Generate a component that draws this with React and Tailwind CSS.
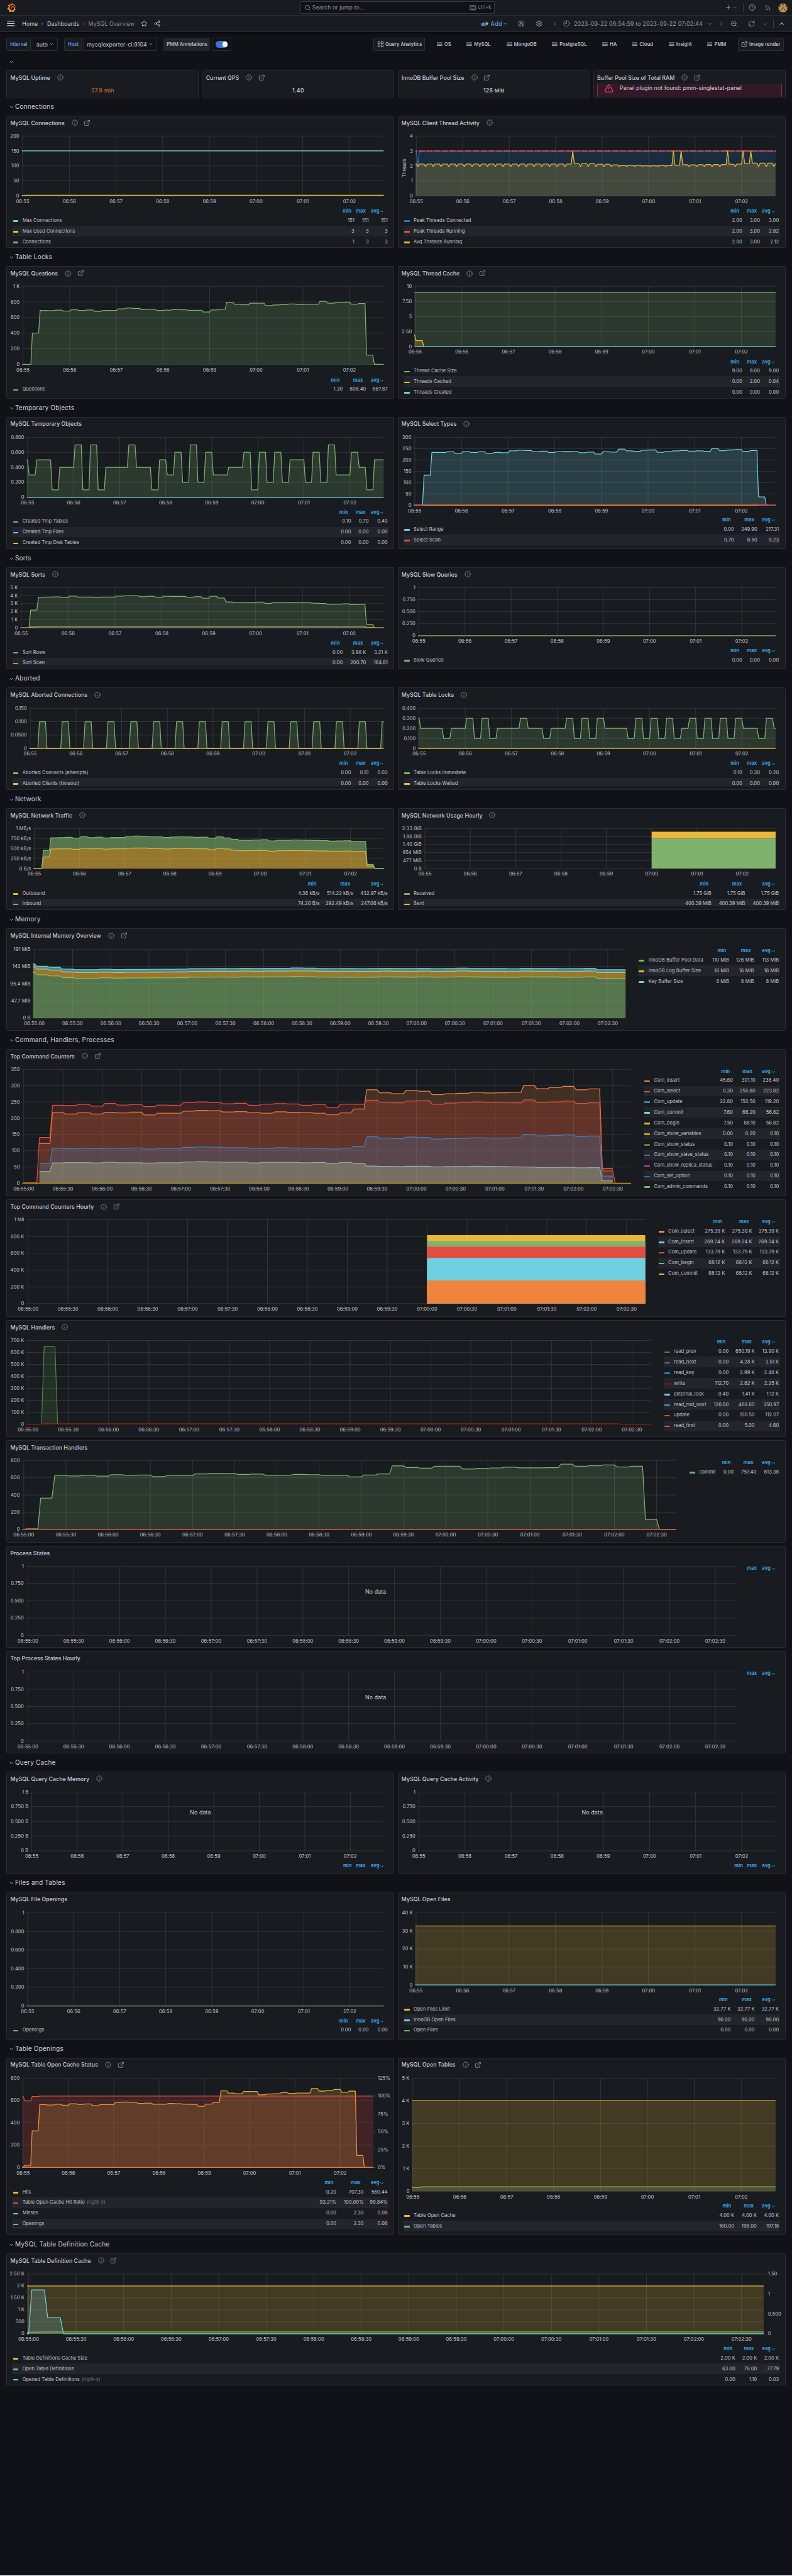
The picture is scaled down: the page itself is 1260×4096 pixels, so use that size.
import React from "react";
import {
  ChevronDown, ChevronRight, ChevronLeft, ChevronUp, Info, ExternalLink, Star, Share2, Save, Settings,
  Clock9, ZoomOut, RefreshCw, Rss, HelpCircle, Plus, Search, Keyboard, LayoutGrid, TriangleAlert,
} from "lucide-react";
import { SiGrafana } from "react-icons/si";

const GREEN = "#7eb26d";
const YELLOW = "#eab839";
const CYAN = "#6ed0e0";
const ORANGE = "#ef843c";
const RED = "#e24d42";
const BLUE = "#1f78c1";
const LIGHT_BLUE = "#447ebc";
const DARK_GREEN = "#508642";

/* ---------- series helpers: time is in seconds from 06:55:00 ---------- */

const flat = (v) => [[-1, v], [464, v]];

// Values hold for eight seconds and move to the next over two.
function steps(before, values) {
  const pts = before === null ? [] : [[-1, before], [0, before]];
  values.forEach((v, k) => {
    if (v === null) return;
    pts.push([2 + 10 * k, v], [Math.min(10 + 10 * k, 464), v]);
  });
  return pts;
}

const repeat = (v, n) => Array.from({ length: n }, () => v);

const questions = [0, 400, 690, 688, 695, 682, 700, 690, 697, 678, 690, 690, 711, 720, 717, 702, 707, 690, 695, 702, 700, 692, 692, 670, 698, 707, 793, 770, 763, 784, 784, 753, 761, 765, 774, 768, 770, 770, 808, 783, 790, 798, 772, 780, 120, 0, 0];
const selectRange = [0, 133, 233, 233, 236, 229, 237, 233, 236, 229, 233, 232, 240, 243, 242, 236, 239, 233, 236, 238, 237, 232, 235, 226, 236, 235, 248, 240, 238, 243, 244, 234, 237, 240, 242, 239, 240, 238, 250, 241, 244, 246, 238, 242, 37, 0, 0];
const tmpTables = [0.3, 0.5, 0.5, 0.1, 0.4, 0.4, 0.7, 0.1, 0.7, 0.1, 0.4, 0.4, 0.4, 0.7, 0.4, 0.4, 0.1, 0.5, 0.3, 0.6, 0.2, 0.7, 0.2, 0.6, 0.3, 0.3, 0.4, 0.4, 0.6, 0.1, 0.6, 0.2, 0.6, 0.2, 0.5, 0.5, 0.2, 0.6, 0.2, 0.7, 0.3, 0.3, 0.6, 0.4, 0.1, 0.5, 0.5];
const sortRows = [0, 2.2, 3.78, 3.83, 3.85, 3.75, 3.95, 3.82, 3.83, 3.77, 3.83, 3.82, 3.95, 3.98, 3.98, 3.87, 3.93, 3.8, 3.92, 3.9, 3.9, 3.8, 3.87, 3.68, 3.92, 3.7, 3.22, 3.14, 3.14, 3.18, 3.2, 3.05, 3.12, 3.13, 3.17, 3.15, 3.14, 3.06, 3.02, 2.92, 2.95, 2.98, 2.88, 2.92, 0.45, 0, 0];
const sortScan = [0, 0.11, ...repeat(0.18, 42), 0.04, 0, 0];
const aborted = Array.from({ length: 47 }, (_, k) => (k % 3 === 1 ? 0.1 : 0));
const tableLocks = [0.2, 0.2, 0.2, 0.1, 0.2, 0.2, 0.3, 0.1, 0.3, 0.1, 0.2, 0.2, 0.2, 0.3, 0.2, 0.2, 0.1, 0.2, 0.2, 0.3, 0.1, 0.3, 0.1, 0.3, 0.2, 0.2, 0.2, 0.1, 0.3, 0.1, 0.3, 0.1, 0.3, 0.1, 0.2, 0.3, 0.1, 0.3, 0.1, 0.3, 0.1, 0.3, 0.2, 0.2, 0.1, 0.3, 0.2];
const outbound = [4, 290, 490, 492, 494, 482, 507, 492, 497, 485, 492, 492, 508, 514, 512, 498, 503, 490, 502, 503, 501, 493, 495, 474, 503, 488, 458, 446, 446, 451, 455, 434, 444, 447, 450, 447, 446, 440, 440, 434, 434, 438, 425, 430, 65, 4, 4];
const traffic = [5, 455, 770, 773, 780, 762, 795, 773, 782, 766, 775, 775, 800, 810, 806, 790, 793, 775, 788, 792, 788, 780, 784, 755, 792, 765, 727, 706, 706, 713, 720, 688, 703, 706, 712, 708, 706, 700, 698, 683, 687, 693, 672, 678, 105, 5, 5];
const bufferPool = [120, 117, 112, 110.5, 110.5, 111.5, 110.7, 111.2, 111.3, 111.5, 111.8, 112, 113.3, 113.5, 113.8, 113.4, 114.3, 114, 114.2, 114.3, 115, 114.8, 113.8, 113.5, 113.6, 113.3, 113.6, 114.3, 114, 113.6, 114.3, 113.3, 113.7, 114.6, 114, 113.6, 113.6, 113, 114.2, 114, 114, 113.2, 113.4, 114.3, 110.3, 110.3, 110.3];
const comSelect = [2, 141, 240, 239.5, 242, 237, 245, 240.5, 242, 235.5, 240.5, 240, 248, 250, 249, 244, 245.5, 240, 243, 244.5, 243.5, 240, 242, 233, 243, 242.5, 255.5, 249, 247, 253, 254, 242.5, 246, 247.5, 250, 248, 248.5, 247, 256, 248, 250, 252.5, 245, 247, 38, 0, 0];
const comInsert = [null, 122, 217, 213, 216.5, 213, 218, 216, 218.5, 210, 215, 215, 221.5, 224, 223, 219, 220, 217, 215, 219.5, 218, 217, 215, 210.5, 216, 228, 287, 278, 275, 285, 283, 272, 275, 276.5, 280, 277.5, 278, 280, 301, 290.5, 294.5, 297.5, 287, 290, 45];
const comUpdate = [null, 61, 107.5, 106, 107.5, 106.5, 108, 107, 108.5, 105, 107, 107, 110.5, 111.5, 111, 109.5, 109.7, 108, 107, 109.5, 108.5, 108, 107, 105, 108, 113.5, 143, 139, 137, 142, 141, 136, 137, 138, 140, 139, 139, 140, 150.5, 145.5, 147, 148.5, 143.5, 145, 22];
const comCommit = [null, 36.5, 62.5, 63.5, 63.7, 62.5, 64.5, 63, 63.3, 62, 63.3, 63.3, 65.5, 66.2, 65.7, 64.5, 65, 62.8, 64.7, 64.7, 64.6, 63, 64, 61, 64.7, 61.5, 53, 52, 51.5, 52.5, 52.5, 50.5, 51.5, 51.5, 52.3, 52, 51.5, 50.8, 50, 48, 48, 49, 47.5, 48.2, 7.5];
const commits = [8, 363, 627, 621, 629, 619, 635, 627, 631, 614, 627, 626, 645, 652, 650, 639, 642, 628, 629, 639, 636, 628, 628, 610, 632, 644, 738, 718, 711, 733, 733, 701, 709, 714, 722, 715, 716, 717, 757, 733, 740, 748, 724, 733, 115, 0, 0];
const hits = [20, 329, 564, 559, 566, 558, 571, 565, 569, 553, 564, 564, 580, 586, 584, 574, 577, 566, 567, 573, 571, 566, 565, 549, 568, 583, 686, 666, 661, 681, 680, 651, 658, 661, 670, 664, 666, 667, 707, 684, 692, 699, 674, 684, 107, 0, 0];

const spikes = new Set([20, 33, 34, 40, 42, 43]);
const threadLevels = [...repeat(2.13, 20), 2.16, 2.16, 2.16, 2.12, 2.12, 2.08, 2.03, 2.04, 2.04, 2.02, 2.02, 2.04, 2.03, 2.06, 2.09, 2.08, 2.09, 2.1, 2.1, 2.1, 2.12, 2.13, 2.16, 2.19, 2.19, 2.19, 2.19];
const avgThreads = [[-1, 2.13], [0, 2.13]];
threadLevels.forEach((v, k) => {
  avgThreads.push([2 + 10 * k, spikes.has(k) ? 3 : 1.98]);
  if (k < 46) avgThreads.push([4 + 10 * k, v], [10 + 10 * k, v]);
  else avgThreads.push([464, v]);
});
const threadDots = Array.from({ length: 233 }, (_, i) => [2 * i, i % 5 === 1 && !spikes.has((i - 1) / 5) ? 2 : 3]);

/* ---------- chart ---------- */

const minuteTicks = Array.from({ length: 8 }, (_, i) => [i * 60, i < 5 ? `06:5${5 + i}` : `07:0${i - 5}`]);
const halfTicks = Array.from({ length: 16 }, (_, i) => [i * 30, `${i < 10 ? `06:5${5 + Math.floor(i / 2)}` : `07:0${Math.floor(i / 2) - 5}`}:${i % 2 ? "30" : "00"}`]);

function Chart({ box, plot, ymax, y, long, series = [], dots, right, axisName, empty }) {
  const [L, R, T, B] = plot;
  const X = (t) => L + ((t + 1) / 465) * (R - L);
  const Y = (v, m = ymax) => B - (v / m) * (B - T);
  const join = (pts, m) => pts.map(([t, v]) => `${X(t).toFixed(1)},${Y(v, m).toFixed(1)}`).join(" ");
  const xt = long ? halfTicks : minuteTicks;
  const rowY = (i) => T + ((B - T) * i) / (y.length - 1);
  return (
    <svg width={box[2]} height={box[3]} viewBox={box.join(" ")} className="block shrink-0 font-['Inter',sans-serif] text-[12px]">
      <g stroke="#42454a" strokeWidth="1">
        {y.map((_, i) => <line key={i} x1={L} x2={R} y1={rowY(i)} y2={rowY(i)} />)}
        {xt.map(([t]) => <line key={t} x1={X(t)} x2={X(t)} y1={T} y2={B} />)}
        {right && right.labels.map((_, i) => {
          const yy = T + ((B - T) * i) / (right.labels.length - 1);
          return <line key={i} x1={R} x2={R + 6} y1={yy} y2={yy} />;
        })}
      </g>
      {series.map((s, i) => {
        const pts = s.data;
        const base = s.base ? [...s.base].reverse() : [[pts[pts.length - 1][0], 0], [pts[0][0], 0]];
        return (
          <g key={i}>
            {s.fill && <polygon points={`${join(pts, s.max)} ${join(base, s.max)}`} fill={s.fillColor || s.color} fillOpacity={s.fill} />}
            {s.width !== 0 && <polyline points={join(pts, s.max)} fill="none" stroke={s.color} strokeWidth={s.width || 2} strokeLinejoin="round" />}
            {dots && i === 0 && dots.map(([t, v]) => <circle key={t} cx={X(t)} cy={Y(v)} r="1.9" fill={RED} />)}
          </g>
        );
      })}
      <g fill="#c4c4d2" letterSpacing="0.1">
        {y.map((label, i) => <text key={i} x={L - 6.5} y={rowY(i) + 4} textAnchor="end">{label}</text>)}
        {xt.map(([t, label]) => <text key={t} x={X(t)} y={B + 18} textAnchor="middle">{label}</text>)}
        {right && right.labels.map((label, i) => (
          <text key={i} x={R + 11} y={T + ((B - T) * i) / (right.labels.length - 1) + 4}>{label}</text>
        ))}
        {axisName && <text transform={`translate(${L - 23.5} ${(T + B) / 2 + 5}) rotate(-90)`} textAnchor="middle">{axisName}</text>}
      </g>
      {empty && <text x={empty[0]} y={empty[1]} textAnchor="middle" fill="#ccccdc" className="text-[14px]" letterSpacing="0.2">No data</text>}
    </svg>
  );
}

/* ---------- legend ---------- */

function Legend({ rows = [], cols, heads = ["min", "max", "avg"] }) {
  return (
    <div className="text-[12px] leading-none tracking-[0.08px] text-[#c4c4d2]">
      <div className="flex h-[20px] items-center justify-end pr-[2.4px] font-bold text-[#33a2e5]">
        {heads.map((h, i) => (
          <div key={h} className={`flex justify-end items-center whitespace-nowrap pr-[7.7px] ${cols[i]}`}>
            {h}
            {h === "avg" && <ChevronDown size={14} strokeWidth={2.6} className="-mr-[0.5px] mt-[2px]" />}
          </div>
        ))}
      </div>
      {rows.map(([color, name, ...values], i) => (
        <div key={name} className={`flex h-[26.8px] items-center pl-[2px] pr-[2.4px] whitespace-nowrap ${i % 2 ? "bg-[#22252b]" : ""}`}>
          <span className={`mt-[3px] mr-[10px] h-[4px] w-[14px] rounded-[1px] ${color}`} />
          <span className="flex-1">
            {name.replace(" (right-y)", "")}
            {name.endsWith("(right-y)") && <span className="ml-[5px] text-[#7b7c86]">(right-y)</span>}
          </span>
          {values.map((v, j) => <span key={j} className={`text-right ${cols[j]}`}>{v}</span>)}
        </div>
      ))}
    </div>
  );
}

const g = "bg-[#7eb26d]", ye = "bg-[#eab839]", cy = "bg-[#6ed0e0]", or = "bg-[#ef843c]", re = "bg-[#e24d42]", bl = "bg-[#1f78c1]";

/* ---------- panels ---------- */

const shell = "rounded-[2px] border border-[#2a2c32] bg-[#181b1f] overflow-hidden";

function Title({ children, info, ext }) {
  return (
    <div className="flex h-[32px] shrink-0 items-center pt-[1px] pl-[8.5px] text-[14px] font-medium text-[#ccccdc]">
      <span className="whitespace-nowrap">{children}</span>
      {info && <Info size={16} className="ml-[17.5px] text-[#91929c]" />}
      {ext && <ExternalLink size={17} className="ml-[15.3px] text-[#91929c]" />}
    </div>
  );
}

function Panel({ title, info, ext, at, size, chart, legendY, legend }) {
  const box = [at[0] + 1, at[1] + 33, 978, legendY - at[1] - 33];
  return (
    <section className={`flex flex-1 flex-col ${size} ${shell}`}>
      <Title info={info} ext={ext}>{title}</Title>
      <Chart box={box} {...chart} />
      <div className="mx-[13px] mb-[8px] min-h-0 flex-1 overflow-hidden"><Legend {...legend} /></div>
    </section>
  );
}

function WidePanel({ title, info, ext, top, size, legendClass, chartWidth, chart, legend }) {
  const inner = { 258: 224, 296: 262, 372: 338 }[size[1]];
  return (
    <section className={`flex flex-col ${size[0]} ${shell}`}>
      <Title info={info} ext={ext}>{title}</Title>
      <div className="flex justify-between">
        <Chart box={[17, top + 33, chartWidth, inner]} long {...chart} />
        <div className={`mr-[13px] mt-[12.7px] ${legendClass}`}><Legend {...legend} /></div>
      </div>
    </section>
  );
}

function Row({ children }) {
  return (
    <div className="flex h-[30px] items-center pl-[7px] text-[16px] tracking-[0.3px] text-[#ccccdc]">
      <ChevronDown size={14} strokeWidth={2.4} className="mt-[3px] mr-[1px]" />
      <h2>{children}</h2>
    </div>
  );
}

const Pair = ({ children }) => <div className="flex gap-2">{children}</div>;

const c3 = ["", "w-[44.6px]", "w-[48px]"];
const cq = ["", "w-[59px]", "w-[54.6px]"];

/* ---------- top bars ---------- */

function Avatar() {
  const cells = ["01010", "01110", "11011", "10101", "01110"];
  return (
    <svg width="24" height="24" viewBox="0 0 24 24" className="ml-[17.7px]">
      <clipPath id="round"><circle cx="12" cy="12" r="12" /></clipPath>
      <g clipPath="url(#round)">
        <rect width="24" height="24" fill="#41631b" />
        {cells.map((r, y) => [...r].map((v, x) => v === "1" && <rect key={`${x}${y}`} x={2 + x * 4} y={2 + y * 4} width="4.1" height="4.1" fill="#f0886a" />))}
      </g>
    </svg>
  );
}

function TopBars() {
  return (
    <header className="bg-[#181b1f] text-[#ccccdc] whitespace-nowrap shadow-[0_1px_6px_rgba(0,0,0,0.7)] [&_svg]:shrink-0">
      <div className="flex h-[40px] items-center border-b border-[#2a2c32] pl-[17px] text-[#9a9ba5]">
        <svg width="0" height="0"><defs><linearGradient id="flame" x1="0" y1="0" x2="0" y2="1"><stop offset="0.2" stopColor="#f05a28" /><stop offset="1" stopColor="#fbca0a" /></linearGradient></defs></svg>
        <SiGrafana size={23} fill="url(#flame)" />
        <div className="ml-[719px] flex h-[32px] w-[490px] shrink-0 items-center rounded-[2px] border border-[#36383f] bg-[#111217] px-[7px] text-[14px] tracking-[0.1px] text-[#8e8f9a]">
          <Search size={17} className="mr-[4px]" />
          <span className="flex-1">Search or jump to...</span>
          <Keyboard size={17} className="mr-[4px]" />
          <span className="text-[12px]">ctrl+k</span>
        </div>
        <Plus size={18} className="ml-[581.3px]" /><ChevronDown size={13} className="ml-[1px] mr-[14.5px]" />
        <span className="h-[23px] w-px bg-[#3b3d44]" />
        <HelpCircle size={18} className="ml-[12.7px]" />
        <Rss size={17} className="ml-[21.3px]" />
        <Avatar />
      </div>
      <div className="flex h-[41px] items-center border-b border-[#2a2c32] pl-[18px] text-[14px] tracking-[0.15px]">
        <svg width="20" height="14" viewBox="0 0 20 14" stroke="currentColor" strokeWidth="1.7" strokeLinecap="round"><path d="M1 1.5h18M1 7h18M1 12.5h18" /></svg>
        <span className="ml-[18px] w-[43px] shrink-0">Home</span>
        <ChevronRight size={13} className="ml-[1px] mr-[6px] text-[#9a9ba5]" />
        <span className="w-[84.5px] shrink-0">Dashboards</span>
        <ChevronRight size={13} className="ml-[1px] mr-[5.7px] text-[#9a9ba5]" />
        <span className="w-[132px] shrink-0 text-[#8e8f9a]">MySQL Overview</span>
        <Star size={17} /><Share2 size={17} className="ml-[17.5px]" />
        <div className="ml-[809.5px] flex items-center text-[#9a9ba5]">
          <svg width="18" height="14" viewBox="0 0 18 14" className="mr-[5px]">
            <g fill="#6e9fff"><rect x="0" y="6" width="2.6" height="7" /><rect x="3.6" y="4" width="2.6" height="9" /><rect x="7.2" y="6" width="2.6" height="7" /><rect x="10.4" y="2" width="2" height="11" /></g>
            <path d="M14.5 4v7M11 7.5h7" stroke="#ff9830" strokeWidth="2" />
          </svg>
          <span className="w-[30px] font-medium tracking-[0.7px] text-[#6e9fff]">Add</span>
          <ChevronDown size={15} className="mr-[24.2px] text-[#6e9fff]" />
          <Save size={17} className="mr-[26.5px]" />
          <Settings size={18} className="mr-[23.8px]" />
          <ChevronLeft size={15} className="mr-[14.5px]" />
          <Clock9 size={17} className="mr-[9.3px]" />
          <span className="w-[335.7px] shrink-0 tracking-[0.33px]">2023-09-22 06:54:59 to 2023-09-22 07:02:44</span>
          <ChevronDown size={13} className="ml-[1px] mr-[16px]" />
          <ChevronRight size={15} className="mr-[14.8px]" />
          <ZoomOut size={18} className="mr-[26px]" />
          <RefreshCw size={18} className="mr-[17.3px]" />
          <ChevronDown size={13} className="ml-[1px] mr-[15px]" />
          <span className="mr-[11.7px] h-[23px] w-px bg-[#3b3d44]" />
          <ChevronUp size={18} strokeWidth={2.4} />
        </div>
      </div>
    </header>
  );
}

function Links() {
  const items = [["OS", "w-[75px]"], ["MySQL", "w-[101px]"], ["MongoDB", "w-[115px]"], ["PostgreSQL", "w-[127px]"], ["HA", "w-[75px]"], ["Cloud", "w-[92.5px]"], ["Insight", "w-[96.5px]"], ["PMM", "w-[78px]"]];
  const btn = "flex h-[32px] items-center rounded-[2px] border border-[#2e3036] bg-[#181b1f] whitespace-nowrap";
  return (
    <div className="flex items-center text-[12px] font-medium tracking-[0.08px] text-[#ccccdc]">
      <div className={`${btn} mr-[30px] w-[130px] pl-[7px]`}><LayoutGrid size={17.5} className="mr-[3.8px]" />Query Analytics</div>
      {items.map(([t, w]) => (
        <div key={t} className={`flex items-center ${w}`}>
          <svg width="14" height="10" viewBox="0 0 14 10" className="mr-[5px] shrink-0" stroke="#ccccdc" strokeWidth="1.3"><path d="M0 1.5h14M0 5.2h14M0 9h14" /></svg>{t}
        </div>
      ))}
      <div className={`${btn} w-[117px] pl-[7px] tracking-[0.25px]`}><ExternalLink size={17} className="mr-[3.6px]" />Image render</div>
    </div>
  );
}

function Controls() {
  const box = "flex h-[32px] shrink-0 items-center rounded-[2px] border border-[#2e3036] px-[8px] whitespace-nowrap";
  return (
    <div className="flex h-[32px] items-center pr-[4px] text-[12px] font-medium tracking-[0.08px]">
      <span className={`${box} w-[62px] bg-[#181b1f] text-[#6e9fff]`}>Interval</span>
      <span className={`${box} ml-[4px] w-[64px] bg-[#111217] text-[14px] font-normal text-[#ccccdc]`}>auto<ChevronDown size={13} className="ml-[3px]" /></span>
      <span className={`${box} ml-[16px] w-[44px] bg-[#181b1f] text-[#6e9fff]`}>Host</span>
      <span className={`${box} ml-[4px] w-[187px] bg-[#111217] text-[14px] font-normal tracking-[0.15px] text-[#ccccdc]`}>mysqlexporter-cl:9104<ChevronDown size={13} className="ml-[4px]" /></span>
      <span className="ml-[16px] flex h-[32px] w-[118px] shrink-0 items-center rounded-[2px] bg-[#22252b] pl-[8px] whitespace-nowrap text-[#ccccdc]">PMM Annotations</span>
      <span className={`${box} ml-[4px] w-[50px] bg-[#111217]`}>
        <span className="flex h-[16px] w-[32px] items-center justify-end rounded-full bg-[#3d71d9] pr-[1px]"><span className="size-[13px] rounded-full bg-white" /></span>
      </span>
      <div className="flex flex-1 justify-end"><Links /></div>
    </div>
  );
}

function Stat({ title, ext, children }) {
  return (
    <section className={`flex h-[68px] flex-1 flex-col ${shell}`}>
      <Title info ext={ext}>{title}</Title>
      {children}
    </section>
  );
}

const value = "pt-[6.5px] text-center text-[14px] font-medium tracking-[0.3px]";
const quarters = ["1", "0.750", "0.500", "0.250", "0"];

export default function App() {
  return (
    <div className="min-h-[6500px] w-[2000px] bg-[#111217] font-['Inter',sans-serif] [zoom:0.63]">
      <TopBars />
      <main className="flex flex-col gap-2 px-[16px] pt-[15px]">
        <div className="mb-[4px]"><Controls /></div>
        <Row />
        <div className="flex gap-2">
          <Stat title="MySQL Uptime"><div className={`${value} text-[#c96a22]`}>37.9 min</div></Stat>
          <Stat title="Current QPS" ext><div className={`${value} text-[#d8d9da]`}>1.40</div></Stat>
          <Stat title="InnoDB Buffer Pool Size" ext><div className={`${value} text-[#d8d9da]`}>128 <span className="text-[13px]">MiB</span></div></Stat>
          <Stat title="Buffer Pool Size of Total RAM" ext>
            <div className="mx-[8px] -mt-[1px] flex h-[60px] shrink-0 items-start border-x border-[#8a2c4c] bg-[#331925] pl-[16px] text-[14px] tracking-[0.13px] whitespace-nowrap text-[#ccccdc]">
              <TriangleAlert size={24} strokeWidth={1.8} className="mr-[16px] text-[#ff5286]" />Panel plugin not found: pmm-singlestat-panel
            </div>
          </Stat>
        </div>

        <Row>Connections</Row>
        <Pair>
          <Panel title="MySQL Connections" info ext at={[16, 292]} size="h-[334px]" legendY={522.9}
            chart={{ plot: [54.7, 968.5, 342.9, 493.8], ymax: 200, y: ["200", "150", "100", "50", "0"], series: [{ color: CYAN, data: flat(150.5) }, { color: GREEN, data: flat(0.8) }, { color: YELLOW, data: steps(1, repeat(2.2, 47)) }] }}
            legend={{ cols: ["", "w-[36.4px]", "w-[47.8px]"], rows: [[cy, "Max Connections", "151", "151", "151"], [ye, "Max Used Connections", "3", "3", "3"], [g, "Connections", "1", "3", "3"]] }} />
          <Panel title="MySQL Client Thread Activity" info at={[1004, 292]} size="h-[334px]" legendY={522.9}
            chart={{ plot: [1048, 1957.3, 342.9, 494.5], ymax: 4, y: ["4", "3", "2", "1", "0"], axisName: "Threads", dots: threadDots, series: [{ color: BLUE, fill: 0.2, data: [[-1, 3], [0, 3], [2, 2], [4, 3], [464, 3]] }, { color: YELLOW, fill: 0.2, data: avgThreads }] }}
            legend={{ cols: c3, rows: [[bl, "Peak Threads Connected", "2.00", "3.00", "3.00"], [re, "Peak Threads Running", "2.00", "3.00", "2.82"], [ye, "Avg Threads Running", "2.00", "3.00", "2.12"]] }} />
        </Pair>

        <Row>Table Locks</Row>
        <Pair>
          <Panel title="MySQL Questions" info ext at={[16, 672]} size="h-[334px]" legendY={949}
            chart={{ plot: [55.8, 968.5, 722.8, 920], ymax: 1000, y: ["1 K", "800", "600", "400", "200", "0"], series: [{ color: GREEN, fill: 0.2, data: steps(0, questions) }] }}
            legend={{ cols: cq, rows: [[g, "Questions", "1.30", "808.40", "667.87"]] }} />
          <Panel title="MySQL Thread Cache" info ext at={[1004, 672]} size="h-[334px]" legendY={902.8}
            chart={{ plot: [1045.3, 1957.3, 722.8, 875], ymax: 10, y: ["10", "7.50", "5", "2.50", "0"], series: [{ color: GREEN, fill: 0.2, data: flat(9) }, { color: YELLOW, fill: 0.2, data: [[-1, 2], [1, 1], [9, 1], [11, 0]] }, { color: CYAN, data: flat(0) }] }}
            legend={{ cols: c3, rows: [[g, "Thread Cache Size", "9.00", "9.00", "9.00"], [ye, "Threads Cached", "0.00", "2.00", "0.04"], [cy, "Threads Created", "0.00", "0.00", "0.00"]] }} />
        </Pair>

        <Row>Temporary Objects</Row>
        <Pair>
          <Panel title="MySQL Temporary Objects" at={[16, 1052]} size="h-[334px]" legendY={1282.4}
            chart={{ plot: [67.2, 968.5, 1103, 1254.6], ymax: 0.8, y: ["0.800", "0.600", "0.400", "0.200", "0"], series: [{ color: GREEN, fill: 0.2, data: steps(0.5, tmpTables) }, { color: CYAN, data: flat(0) }] }}
            legend={{ cols: c3, rows: [[g, "Created Tmp Tables", "0.10", "0.70", "0.40"], [cy, "Created Tmp Files", "0.00", "0.00", "0.00"], [ye, "Created Tmp Disk Tables", "0.00", "0.00", "0.00"]] }} />
          <Panel title="MySQL Select Types" info at={[1004, 1052]} size="h-[334px]" legendY={1302.5}
            chart={{ plot: [1044, 1957.3, 1103, 1274.5], ymax: 300, y: ["300", "250", "200", "150", "100", "50", "0"], series: [{ color: CYAN, fill: 0.2, data: steps(0, selectRange) }, { color: ORANGE, data: flat(0) }, { color: RED, data: steps(1, [1, ...repeat(4.5, 43), 1, 0, 0]) }] }}
            legend={{ cols: cq, rows: [[cy, "Select Range", "0.00", "249.90", "217.31"], [re, "Select Scan", "0.70", "6.50", "5.23"]] }} />
        </Pair>

        <Row>Sorts</Row>
        <Pair>
          <Panel title="MySQL Sorts" info at={[16, 1432]} size="h-[258px]" legendY={1612.9}
            chart={{ plot: [51.2, 968.5, 1483, 1584.5], ymax: 5, y: ["5 K", "4 K", "3 K", "2 K", "1 K", "0"], series: [{ color: GREEN, fill: 0.2, data: steps(0, sortRows) }, { color: CYAN, data: flat(0) }, { color: ORANGE, data: steps(0, sortScan) }] }}
            legend={{ cols: cq, rows: [[g, "Sort Rows", "0.00", "3.98 K", "3.21 K"], [or, "Sort Scan", "0.00", "200.70", "164.81"]] }} />
          <Panel title="MySQL Slow Queries" info at={[1004, 1432]} size="h-[258px]" legendY={1632.4}
            chart={{ plot: [1054.2, 1957.3, 1483, 1604.6], ymax: 1, y: quarters, series: [{ color: GREEN, data: flat(0) }] }}
            legend={{ cols: c3, rows: [[g, "Slow Queries", "0.00", "0.00", "0.00"]] }} />
        </Pair>

        <Row>Aborted</Row>
        <Pair>
          <Panel title="MySQL Aborted Connections" info at={[16, 1736]} size="h-[258px]" legendY={1916.8}
            chart={{ plot: [74, 968.5, 1786.8, 1888.3], ymax: 0.15, y: ["0.150", "0.100", "0.0500", "0"], series: [{ color: GREEN, fill: 0.2, data: steps(0, aborted) }, { color: YELLOW, data: flat(0) }] }}
            legend={{ cols: c3, rows: [[g, "Aborted Connects (attempts)", "0.00", "0.10", "0.03"], [ye, "Aborted Clients (timeout)", "0.00", "0.00", "0.00"]] }} />
          <Panel title="MySQL Table Locks" info at={[1004, 1736]} size="h-[258px]" legendY={1916.8}
            chart={{ plot: [1055, 1957.3, 1786.8, 1888.3], ymax: 0.4, y: ["0.400", "0.300", "0.200", "0.100", "0"], series: [{ color: GREEN, fill: 0.2, data: steps(0.3, tableLocks) }, { color: YELLOW, data: flat(0) }] }}
            legend={{ cols: c3, rows: [[g, "Table Locks Immediate", "0.10", "0.30", "0.20"], [ye, "Table Locks Waited", "0.00", "0.00", "0.00"]] }} />
        </Pair>

        <Row>Network</Row>
        <Pair>
          <Panel title="MySQL Network Traffic" info at={[16, 2040]} size="h-[258px]" legendY={2221}
            chart={{ plot: [84.3, 968.5, 2091, 2192.1], ymax: 1000, y: ["1 MB/s", "750 kB/s", "500 kB/s", "250 kB/s", "0 B/s"], series: [{ color: YELLOW, fill: 0.6, data: steps(4, outbound) }, { color: GREEN, fill: 0.6, data: steps(5, traffic), base: steps(4, outbound) }] }}
            legend={{ cols: ["", "w-[85px]", "w-[87px]"], rows: [[ye, "Outbound", "4.36 kB/s", "514.22 kB/s", "432.97 kB/s"], [g, "Inbound", "74.20 B/s", "292.49 kB/s", "247.06 kB/s"]] }} />
          <Panel title="MySQL Network Usage Hourly" info at={[1004, 2040]} size="h-[258px]" legendY={2221}
            chart={{ plot: [1069.8, 1957.3, 2091, 2192.1], ymax: 2.33, y: ["2.33 GiB", "1.86 GiB", "1.40 GiB", "954 MiB", "477 MiB", "0 B"], series: [{ color: YELLOW, fill: 1, width: 0, data: [[300, 2.14], [464, 2.14]], base: [[300, 1.75], [464, 1.75]] }, { color: GREEN, fill: 1, width: 0, data: [[300, 1.75], [464, 1.75]] }] }}
            legend={{ cols: ["", "w-[85px]", "w-[85.5px]"], rows: [[g, "Received", "1.75 GiB", "1.75 GiB", "1.75 GiB"], [ye, "Sent", "400.39 MiB", "400.39 MiB", "400.39 MiB"]] }} />
        </Pair>

        <Row>Memory</Row>
        <WidePanel title="MySQL Internal Memory Overview" info ext top={2344} size={["h-[258px]", 258]} chartWidth={1575} legendClass="w-[358px]"
          chart={{ plot: [83, 1579.5, 2395, 2569], ymax: 191, y: ["191 MiB", "143 MiB", "95.4 MiB", "47.7 MiB", "0 B"], series: [
            { color: GREEN, fill: 0.6, data: steps(126.5, bufferPool) },
            { color: YELLOW, fill: 0.6, data: steps(142.5, bufferPool.map((v) => v + 16)), base: steps(126.5, bufferPool) },
            { color: CYAN, fill: 0.6, data: steps(150.5, bufferPool.map((v) => v + 24)), base: steps(142.5, bufferPool.map((v) => v + 16)) }] }}
          legend={{ cols: ["", "w-[62.5px]", "w-[63.2px]"], rows: [[g, "InnoDB Buffer Pool Data", "110 MiB", "126 MiB", "113 MiB"], [ye, "InnoDB Log Buffer Size", "16 MiB", "16 MiB", "16 MiB"], [cy, "Key Buffer Size", "8 MiB", "8 MiB", "8 MiB"]] }} />

        <Row>Command, Handlers, Processes</Row>
        <WidePanel title="Top Command Counters" info ext top={2648} size={["h-[372px]", 372]} chartWidth={1595} legendClass="w-[344px]"
          chart={{ plot: [56.2, 1593.2, 2699, 2986.6], ymax: 350, y: ["350", "300", "250", "200", "150", "100", "50", "0"], series: [
            { color: ORANGE, fill: 0.2, data: steps(null, comInsert) },
            { color: RED, fill: 0.2, data: steps(1, comSelect) },
            { color: LIGHT_BLUE, fill: 0.25, data: steps(null, comUpdate) },
            { color: CYAN, fill: 0.2, width: 0, data: steps(null, comCommit) },
            { color: "#96a8a4", fillColor: YELLOW, fill: 0.17, data: steps(null, comCommit) },
            { color: "#bfa31c", data: flat(0.3) }] }}
          legend={{ cols: ["", "w-[56.8px]", "w-[59.3px]"], rows: [
            [or, "Com_insert", "45.60", "301.10", "238.40"], [re, "Com_select", "0.30", "255.80", "223.82"], ["bg-[#447ebc]", "Com_update", "22.80", "150.50", "119.20"], [cy, "Com_commit", "7.60", "66.20", "56.82"], [ye, "Com_begin", "7.50", "66.10", "56.82"], ["bg-[#cca300]", "Com_show_variables", "0.00", "0.20", "0.10"], ["bg-[#508642]", "Com_show_status", "0.10", "0.10", "0.10"], ["bg-[#705da0]", "Com_show_slave_status", "0.10", "0.10", "0.10"], ["bg-[#ba43a9]", "Com_show_replica_status", "0.10", "0.10", "0.10"], [bl, "Com_set_option", "0.10", "0.10", "0.10"], [g, "Com_admin_commands", "0.10", "0.10", "0.10"]] }} />
        <WidePanel title="Top Command Counters Hourly" info ext top={3028} size={["h-[296px]", 296]} chartWidth={1630} legendClass="w-[308px]"
          chart={{ plot: [67, 1629, 3079.1, 3290.9], ymax: 1000, y: ["1 Mil", "800 K", "600 K", "400 K", "200 K", "0"], series: [
            { color: YELLOW, fill: 1, width: 0, data: [[300, 814.7], [464, 814.7]] }, { color: GREEN, fill: 1, width: 0, data: [[300, 746.5], [464, 746.5]] }, { color: RED, fill: 1, width: 0, data: [[300, 678.4], [464, 678.4]] }, { color: CYAN, fill: 1, width: 0, data: [[300, 544.6], [464, 544.6]] }, { color: ORANGE, fill: 1, width: 0, data: [[300, 275.4], [464, 275.4]] }] }}
          legend={{ cols: ["", "w-[68.9px]", "w-[67.6px]"], rows: [[or, "Com_select", "275.39 K", "275.39 K", "275.39 K"], [cy, "Com_insert", "269.24 K", "269.24 K", "269.24 K"], [re, "Com_update", "133.79 K", "133.79 K", "133.79 K"], [g, "Com_begin", "68.12 K", "68.12 K", "68.12 K"], [ye, "Com_commit", "68.12 K", "68.12 K", "68.12 K"]] }} />
        <WidePanel title="MySQL Handlers" info top={3332} size={["h-[296px]", 296]} chartWidth={1645} legendClass="w-[294px]"
          chart={{ plot: [67, 1643, 3383.3, 3594.5], ymax: 700, y: ["700 K", "600 K", "500 K", "400 K", "300 K", "200 K", "100 K", "0"], series: [{ color: DARK_GREEN, fill: 0.2, data: [[10, 0], [12, 651], [20, 651], [22, 0]] }, { color: "#b8320f", data: steps(0, [0, ...repeat(2.5, 43), 0, 0, 0]) }, { color: "#890f02", data: flat(0), width: 1.4 }] }}
          legend={{ cols: ["", "w-[65.7px]", "w-[61.2px]"], rows: [["bg-[#508642]", "read_prev", "0.00", "650.19 K", "13.90 K"], ["bg-[#705da0]", "read_next", "0.00", "4.28 K", "3.51 K"], [bl, "read_key", "0.00", "2.99 K", "2.48 K"], ["bg-[#890f02]", "write", "112.70", "2.82 K", "2.25 K"], [cy, "external_lock", "0.40", "1.41 K", "1.12 K"], ["bg-[#447ebc]", "read_rnd_next", "126.60", "488.60", "350.97"], ["bg-[#c15c17]", "update", "0.00", "150.50", "112.07"], [re, "read_first", "0.00", "5.00", "4.60"]] }} />
        <WidePanel title="MySQL Transaction Handlers" top={3636} size={["h-[258px]", 258]} chartWidth={1705} legendClass="w-[230px]"
          chart={{ plot: [56, 1707.5, 3686.9, 3861], ymax: 800, y: ["800", "600", "400", "200", "0"], series: [{ color: GREEN, fill: 0.2, data: steps(0, commits) }, { color: RED, data: flat(0), width: 2.4 }] }}
          legend={{ cols: ["", "w-[57.4px]", "w-[56.8px]"], rows: [[g, "commit", "0.00", "757.40", "613.38"]] }} />
        <WidePanel title="Process States" top={3902} size={["h-[258px]", 258]} chartWidth={1850} legendClass="w-[100px]"
          chart={{ plot: [66, 1860, 3953, 4127.6], ymax: 1, y: quarters, empty: [948.3, 4023] }}
          legend={{ heads: ["max", "avg"], cols: ["", "w-[48px]"] }} />
        <WidePanel title="Top Process States Hourly" top={4168} size={["h-[258px]", 258]} chartWidth={1850} legendClass="w-[100px]"
          chart={{ plot: [66, 1860, 4219.4, 4393.5], ymax: 1, y: quarters, empty: [948.3, 4289] }}
          legend={{ heads: ["max", "avg"], cols: ["", "w-[48px]"] }} />

        <Row>Query Cache</Row>
        <Pair>
          <Panel title="MySQL Query Cache Memory" info at={[16, 4472]} size="h-[258px]" legendY={4699.9}
            chart={{ plot: [77.8, 968.5, 4523, 4671.6], ymax: 1, y: ["1 B", "0.750 B", "0.500 B", "0.250 B", "0 B"], empty: [505.7, 4580.4] }}
            legend={{ cols: ["", "w-[35px]", "w-[48px]"] }} />
          <Panel title="MySQL Query Cache Activity" info at={[1004, 4472]} size="h-[258px]" legendY={4699.9}
            chart={{ plot: [1054.2, 1957.3, 4523, 4671.6], ymax: 1, y: quarters, empty: [1494.3, 4580.4] }}
            legend={{ cols: ["", "w-[35px]", "w-[48px]"] }} />
        </Pair>

        <Row>Files and Tables</Row>
        <Pair>
          <Panel title="MySQL File Openings" at={[16, 4776]} size="h-[372px]" legendY={5090.9}
            chart={{ plot: [67.2, 968.5, 4827.2, 5062.2], ymax: 1, y: ["1", "0.800", "0.600", "0.400", "0.200", "0"], series: [{ color: GREEN, data: flat(0) }] }}
            legend={{ cols: c3, rows: [[g, "Openings", "0.00", "0.00", "0.00"]] }} />
          <Panel title="MySQL Open Files" at={[1004, 4776]} size="h-[372px]" legendY={5037.4}
            chart={{ plot: [1047.3, 1957.3, 4827.2, 5009.8], ymax: 40, y: ["40 K", "30 K", "20 K", "10 K", "0"], series: [{ color: "#cfa233", fillColor: YELLOW, fill: 0.2, data: flat(32.77) }, { color: CYAN, data: flat(0.1) }] }}
            legend={{ cols: ["", "w-[60.6px]", "w-[61.2px]"], rows: [[ye, "Open Files Limit", "32.77 K", "32.77 K", "32.77 K"], [cy, "InnoDB Open Files", "96.00", "96.00", "96.00"], [g, "Open Files", "0.00", "0.00", "0.00"]] }} />
        </Pair>

        <Row>Table Openings</Row>
        <Pair>
          <Panel title="MySQL Table Open Cache Status" info ext at={[16, 5194]} size="h-[448px]" legendY={5499.2}
            chart={{ plot: [56, 942.6, 5245.1, 5470.6], ymax: 800, y: ["800", "600", "400", "200", "0"], right: { labels: ["125%", "100%", "75%", "50%", "25%", "0%"] }, series: [{ color: "#eaa839", fillColor: YELLOW, fill: 0.2, data: steps(0, hits) }, { color: CYAN, data: steps(0, [2, 2]) }, { color: RED, fill: 0.2, max: 125, data: steps(100, [93.2, 99.3, ...repeat(100, 45)]) }, { color: "#e2773f", data: flat(0) }] }}
            legend={{ cols: ["", "w-[69px]", "w-[60.6px]"], rows: [[ye, "Hits", "0.20", "707.30", "560.44"], [re, "Table Open Cache Hit Ratio (right-y)", "93.21%", "100.00%", "99.84%"], [cy, "Misses", "0.00", "2.30", "0.08"], [g, "Openings", "0.00", "2.30", "0.08"]] }} />
          <Panel title="MySQL Open Tables" info ext at={[1004, 5194]} size="h-[448px]" legendY={5558.5}
            chart={{ plot: [1039.3, 1957.3, 5245.1, 5530.5], ymax: 5, y: ["5 K", "4 K", "3 K", "2 K", "1 K", "0"], series: [{ color: YELLOW, fill: 0.2, data: flat(4) }, { color: "#93b155", fillColor: GREEN, fill: 0.2, data: steps(0.16, [0.17, ...repeat(0.198, 46)]) }] }}
            legend={{ cols: ["", "w-[56.8px]", "w-[56.1px]"], rows: [[ye, "Table Open Cache", "4.00 K", "4.00 K", "4.00 K"], [g, "Open Tables", "160.00", "198.00", "197.18"]] }} />
        </Pair>

        <Row>MySQL Table Definition Cache</Row>
        <section className={`flex h-[334px] flex-col ${shell}`}>
          <Title info ext>MySQL Table Definition Cache</Title>
          <Chart long box={[17, 5721, 1966, 197.6]} plot={[67.8, 1928, 5739.8, 5890.7]} ymax={2.5} y={["2.50 K", "2 K", "1.50 K", "1 K", "500", "0"]} right={{ labels: ["1.50", "1", "0.500", "0"] }}
            series={[{ color: YELLOW, fill: 0.2, data: flat(2) }, { color: "#8fb052", fillColor: GREEN, fill: 0.2, data: steps(0.063, [0.075, ...repeat(0.078, 46)]) }, { color: CYAN, fill: 0.2, max: 1.5, data: steps(0, [1.1, 0.403, ...repeat(0, 45)]) }]} />
          <div className="mx-[13px]">
            <Legend cols={["", "w-[54.6px]", "w-[55.5px]"]} rows={[[ye, "Table Definitions Cache Size", "2.00 K", "2.00 K", "2.00 K"], [g, "Open Table Definitions", "63.00", "78.00", "77.79"], [cy, "Opened Table Definitions (right-y)", "0.00", "1.10", "0.03"]]} />
          </div>
        </section>
      </main>
    </div>
  );
}
